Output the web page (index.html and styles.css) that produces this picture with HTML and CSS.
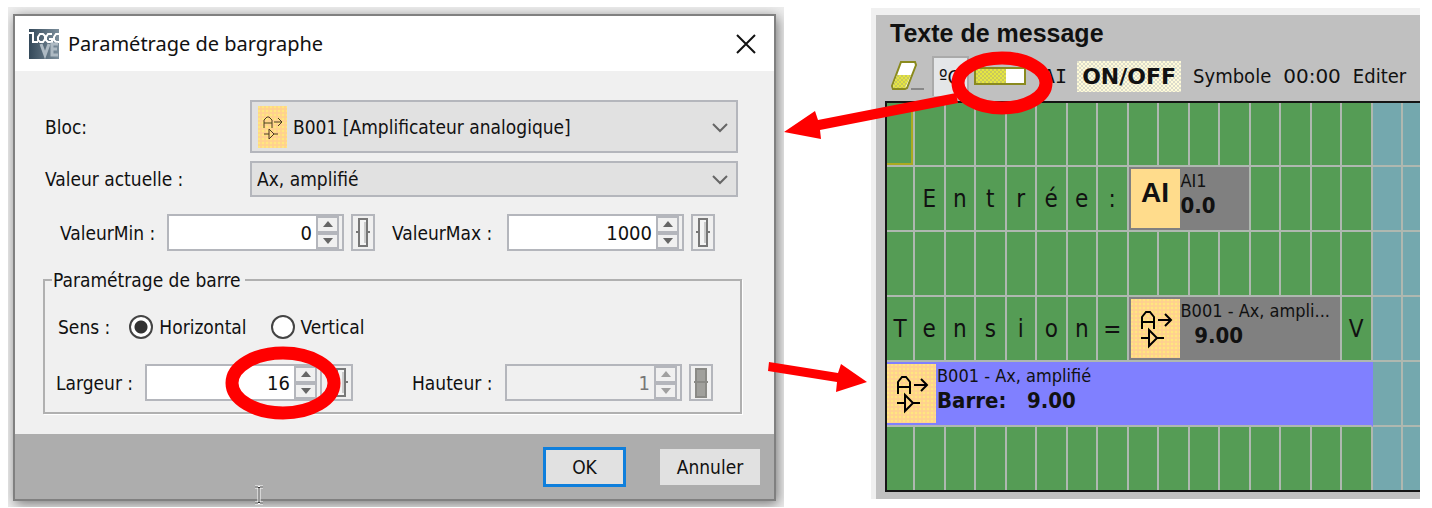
FILE: index.html
```html
<!DOCTYPE html>
<html lang="fr">
<head>
<meta charset="utf-8">
<title>Paramétrage de bargraphe</title>
<link rel="stylesheet" href="styles.css">
</head>
<body>
<svg class="defs" aria-hidden="true">
  <defs>
    <pattern id="speckle" width="4" height="4" patternUnits="userSpaceOnUse">
      <rect width="4" height="4" fill="#ffd58a"/>
      <rect width="2" height="2" fill="#ffe680"/>
      <rect x="2" y="2" width="2" height="2" fill="#ffcf92"/>
    </pattern>
    <pattern id="hatch" width="4" height="4" patternUnits="userSpaceOnUse">
      <rect width="4" height="4" fill="#e6e640"/>
      <rect width="2" height="2" fill="#c9c95c"/>
      <rect x="2" y="2" width="2" height="2" fill="#c9c95c"/>
    </pattern>
    <linearGradient id="steel"><stop offset="0" stop-color="#34495a"/><stop offset="1" stop-color="#7d8f9c"/></linearGradient>
    <symbol id="amplifier" viewBox="0 0 49 59">
      <rect width="49" height="59" fill="url(#speckle)"/>
      <path d="M11 30V18l4-5h4l4 5v12M11 23h12M27 21h13M34 15l6 6-6 6M10 39h8M18 31v16l8-8zM26 39h7" fill="none" stroke="#000" stroke-width="2"/>
    </symbol>
    <symbol id="slider" viewBox="0 0 20 33">
      <rect x="6" y="3" width="8" height="27" fill="#f4f4f4" stroke="#777" stroke-width="2"/>
      <path d="M3 16h3M14 16h3" stroke="#777" stroke-width="2"/>
      <path d="M12 6v21" stroke="#ccc" stroke-width="2"/>
    </symbol>
  </defs>
</svg>
<main class="sheet">
  <section class="shot">
    <form class="dialog" aria-labelledby="dialog-title">
      <header class="titlebar">
        <svg class="app-icon" viewBox="0 0 30 30" aria-hidden="true">
          <rect width="30" height="30" fill="url(#steel)"/>
          <path d="M0 4h4v9h5M14 5h-3l-2 3v3l2 2h3l2-3V7zM23 5h-4l-2 3v3l2 2h4v-3h-3M30 5h-3l-2 3v3l2 2h3" fill="none" stroke="#fff" stroke-width="2"/>
          <path d="M12 15l4 11 4-11M29 15h-6v11h6M23 20h5" fill="none" stroke="#aebac3" stroke-width="3"/>
        </svg>
        <h1 class="dialog-title" id="dialog-title">Paramétrage de bargraphe</h1>
        <button class="close" type="button" aria-label="Fermer">
          <svg viewBox="0 0 20 20"><path d="M1 1l18 18M19 1L1 19" stroke="#111" stroke-width="2"/></svg>
        </button>
      </header>
      <div class="form-body">
        <div class="field">
          <label for="bloc">Bloc:</label>
          <div class="combo">
            <select class="with-icon" id="bloc"><option>B001 [Amplificateur analogique]</option></select>
            <svg class="combo-icon" viewBox="0 0 29 42" aria-hidden="true">
              <rect width="29" height="42" fill="url(#speckle)"/>
              <path d="M6 22v-8l3-3h2l3 3v8M6 17h8M16 16h8M20 12l4 4-4 4M6 28h5M11 23v10l5-5zM16 28h4" fill="none" stroke="#4a3c20" stroke-width="1"/>
            </svg>
            <svg class="chevron" viewBox="0 0 16 10"><path d="M1 1l7 7 7-7" fill="none" stroke="#666" stroke-width="2"/></svg>
          </div>
        </div>
        <div class="field">
          <label for="valeur">Valeur actuelle :</label>
          <div class="combo">
            <select id="valeur"><option>Ax, amplifié</option></select>
            <svg class="chevron" viewBox="0 0 16 10"><path d="M1 1l7 7 7-7" fill="none" stroke="#666" stroke-width="2"/></svg>
          </div>
        </div>
        <div class="pair range">
          <label for="vmin">ValeurMin :</label>
          <div class="spinner">
            <input id="vmin" type="text" value="0">
            <span class="steps"><button type="button" class="up" aria-label="Augmenter"></button><button type="button" class="down" aria-label="Diminuer"></button></span>
          </div>
          <button class="ref" type="button" aria-label="Référence"><svg><use href="#slider"/></svg></button>
          <label for="vmax">ValeurMax :</label>
          <div class="spinner">
            <input id="vmax" type="text" value="1000">
            <span class="steps"><button type="button" class="up" aria-label="Augmenter"></button><button type="button" class="down" aria-label="Diminuer"></button></span>
          </div>
          <button class="ref" type="button" aria-label="Référence"><svg><use href="#slider"/></svg></button>
        </div>
        <fieldset class="group">
          <legend>Paramétrage de barre</legend>
          <div class="direction">
            <span>Sens :</span>
            <label class="choice"><input type="radio" name="sens" checked>Horizontal</label>
            <label class="choice"><input type="radio" name="sens">Vertical</label>
          </div>
          <div class="pair size">
            <label for="largeur">Largeur :</label>
            <div class="spinner">
              <input id="largeur" type="text" value="16">
              <span class="steps"><button type="button" class="up" aria-label="Augmenter"></button><button type="button" class="down" aria-label="Diminuer"></button></span>
            </div>
            <button class="ref" type="button" aria-label="Référence"><svg><use href="#slider"/></svg></button>
            <label for="hauteur">Hauteur :</label>
            <div class="spinner off">
              <input id="hauteur" type="text" value="1" disabled>
              <span class="steps"><button type="button" class="up" aria-label="Augmenter" disabled></button><button type="button" class="down" aria-label="Diminuer" disabled></button></span>
            </div>
            <button class="ref" type="button" aria-label="Référence" disabled>
              <svg viewBox="0 0 20 33"><rect x="5" y="3" width="10" height="28" fill="#a0a09c" stroke="#8a8a86" stroke-width="2"/><path d="M3 16h14" stroke="#8a8a86" stroke-width="2"/></svg>
            </button>
          </div>
        </fieldset>
      </div>
      <footer class="actions">
        <button class="btn primary" type="submit">OK</button>
        <button class="btn" type="button">Annuler</button>
      </footer>
    </form>
  </section>
  <section class="message">
    <div class="panel">
      <h2 class="panel-title">Texte de message</h2>
      <div class="toolbar">
        <button class="tool eraser" type="button" aria-label="Effacer">
          <svg viewBox="0 0 34 30"><path d="M10 1h14l1 3-9 23-2 1H2l-1-3z" fill="#fff" stroke="#8a8a1e" stroke-width="2"/><path d="M6 14h14l-6 13H3l-1-2z" fill="url(#hatch)"/><path d="M20 28h13" stroke="#888" stroke-width="2"/></svg>
        </button>
        <button class="tool unit" type="button">ºC</button>
        <button class="tool bar" type="button" aria-label="Bargraphe">
          <svg viewBox="0 0 52 18"><rect x="1" y="1" width="50" height="16" fill="#fff" stroke="#8a8a1e" stroke-width="2"/><rect x="2" y="2" width="30" height="14" fill="url(#hatch)"/></svg>
        </button>
        <button class="tool ai" type="button">AI</button>
        <button class="tool onoff" type="button">ON/OFF</button>
        <button class="tool" type="button">Symbole</button>
        <button class="tool clock" type="button">00:00</button>
        <button class="tool edit" type="button">Editer</button>
      </div>
      <div class="lcd" id="lcd"></div>
    </div>
  </section>
  <svg class="notes" viewBox="0 0 1432 508" aria-hidden="true">
    <g fill="none" stroke="#f00" stroke-width="13">
      <ellipse cx="283" cy="383" rx="51" ry="30"/>
      <ellipse cx="1002" cy="83" rx="44" ry="25"/>
    </g>
    <path d="M956 93L818 120L815 111L784 132L821 139L820 130L958 103z" fill="#f00"/>
    <path d="M769 362L838 373L841 364L867 382L836 392L837 382L768 371z" fill="#f00"/>
    <path d="M255 487h3l1 1 1-1h3M259 488v14M255 503h3l1-1 1 1h3" fill="none" stroke="#fff" stroke-width="3"/>
    <path d="M255 487h3l1 1 1-1h3M259 488v14M255 503h3l1-1 1 1h3" fill="none" stroke="#333" stroke-width="1"/>
  </svg>
</main>
<script src="script.js"></script>
</body>
</html>
```
FILE: styles.css
```css
* { box-sizing: border-box; }
body {
  margin: 0;
  background: #fff;
  color: #111;
  font: 19px/24px "DejaVu Sans Condensed", "DejaVu Sans", sans-serif;
}
button, input, select { margin: 0; padding: 0; border: 0; font: inherit; color: inherit; border-radius: 0; }
h1, h2 { margin: 0; }
.defs { position: absolute; width: 0; height: 0; }
.sheet {
  position: relative;
  display: grid;
  grid-template-columns: 776fr 549fr;
  column-gap: 87px;
  align-items: start;
  padding: 7px 12px 1px 8px;
  overflow: hidden;
}
.notes { position: absolute; top: 0; left: 0; width: 100%; pointer-events: none; }

.shot { min-width: 0; padding: 7px 8px 6px 5px; background: #eee; overflow: hidden; }
.dialog { border: 2px solid #808080; background: #f0f0f0; box-shadow: 2px 3px 12px #777; }
.titlebar { display: flex; align-items: center; height: 55px; padding: 0 18px 0 14px; background: #fff; }
.app-icon { width: 30px; height: 30px; }
.dialog-title { flex: 1; margin-left: 9px; font: 20px/30px "Noto Sans", "Open Sans", sans-serif; }
.close { display: flex; background: none; }
.close svg { width: 20px; height: 20px; }
.form-body { display: flex; flex-direction: column; padding: 29px 32px 20px 28px; }
.field { display: grid; grid-template-columns: 205px 1fr; align-items: center; margin: 0 4px 8px 2px; }
.combo { position: relative; }
.combo select {
  display: block;
  width: 100%;
  height: 36px;
  padding: 0 40px 0 5px;
  border: 2px solid #b4b6bc;
  background: #e1e1e1;
  appearance: none;
}
.combo select.with-icon { height: 53px; padding-left: 41px; }
.combo-icon { position: absolute; left: 8px; top: 6px; width: 29px; height: 42px; }
.chevron { position: absolute; right: 10px; top: calc(50% - 4px); width: 16px; height: 10px; pointer-events: none; }
.pair { display: grid; align-items: center; }
.range { grid-template-columns: 107px minmax(0, 1fr) 24px 132px minmax(0, 1fr) 24px; margin: 9px 27px 15px 17px; }
.size { grid-template-columns: 89px minmax(0, 1fr) 24px 152px minmax(0, 1fr) 24px; margin-top: 25px; }
.range .ref + label { padding-left: 17px; }
.size .ref + label { padding-left: 59px; }
.spinner { display: flex; height: 37px; margin-right: 7px; border: 2px solid #b4b6bc; background: #f0f0f0; }
.spinner input { flex: 1; min-width: 0; padding-right: 4px; background: #fff; text-align: right; font-size: 20px; }
.spinner.off input { background: #f0f0f0; color: #777; }
.steps { display: flex; flex-direction: column; width: 26px; padding-right: 3px; }
.steps button { display: flex; flex: 1; align-items: center; justify-content: center; border: 2px solid #b4b6bc; background: #f0f0f0; }
.steps button::before { content: ""; border: 5px solid transparent; }
.steps .up::before { border-top: 0; border-bottom: 6px solid #666; }
.steps .down::before { border-bottom: 0; border-top: 6px solid #666; }
.off .up::before { border-bottom-color: #a0a0a0; }
.off .down::before { border-top-color: #a0a0a0; }
.ref { display: flex; width: 24px; height: 37px; border: 2px solid #b4b6bc; background: #f0f0f0; }
.ref svg { width: 20px; height: 33px; }
.group { min-width: 0; margin: 2px 0 0; padding: 23px 27px 11px 11px; border: 2px solid #b0b0b0; box-shadow: 1px 1px 0 #fff; }
.group legend { margin-left: -4px; padding: 0 4px 0 1px; }
.direction { display: flex; align-items: center; padding-left: 2px; }
.choice { display: flex; align-items: center; margin-left: 19px; }
.choice + .choice { margin-left: 24px; }
.choice input { width: 24px; height: 24px; margin-right: 6px; border: 2px solid #444; border-radius: 50%; background: #fff; appearance: none; }
.choice input:checked { background: radial-gradient(circle, #333 0 6px, #fff 7px); }
.actions { display: flex; align-items: center; justify-content: flex-end; gap: 34px; height: 65px; padding: 0 14px; background: #adadad; }
.btn { width: 100px; height: 36px; background: #e1e1e1; }
.primary { width: 83px; height: 40px; border: 3px solid #0f7fdc; }

.message { min-width: 0; margin-top: 1px; padding: 7px 0 0 5px; background: #f0f0f0; }
.panel { padding: 3px 0 7px 9px; background: #c0c0c0; overflow: hidden; }
.panel-title { padding-left: 5px; font: bold 25px/30px "Liberation Sans", Arial, sans-serif; }
.toolbar { display: flex; align-items: center; height: 40px; margin: 8px 0 5px; padding-left: 6px; overflow: hidden; white-space: nowrap; font-size: 20px; }
.tool { flex: none; margin-right: 12px; background: none; }
.eraser { display: flex; margin-right: 7px; }
.eraser svg { width: 34px; height: 30px; }
.unit { width: 37px; height: 40px; margin-right: 5px; padding-left: 5px; border: 2px solid #aaa; border-bottom: 0; background: #e4e6e8; text-align: left; }
.bar { display: flex; margin-right: 17px; }
.bar svg { width: 52px; height: 18px; }
.ai { font-family: "DejaVu Sans Mono", monospace; margin-right: 10px; }
.onoff {
  width: 104px;
  height: 31px;
  background: repeating-conic-gradient(#fffbd8 0 25%, #dcdccc 0 50%) 0 0 / 4px 4px;
  font: bold 22px/31px "DejaVu Sans", sans-serif;
}
.clock { font-family: "DejaVu Sans", sans-serif; }
.edit { margin-right: 0; }
.lcd {
  display: grid;
  grid-template-columns: 28px repeat(16, minmax(0, 1fr)) 17px;
  grid-template-rows: 64px repeat(4, 65px) 63px;
  border: 2px solid #151515;
  border-right: 0;
}
.cell {
  display: flex;
  align-items: center;
  justify-content: center;
  border: solid #afb8b0;
  border-width: 0 2px 2px 0;
  background: #559c55;
  font-size: 24px;
}
.cell.free { background: #74a8ae; }
.cell.last { border-right: 0; }
.cell.bottom { border-bottom: 0; }
.cell.cursor { box-shadow: inset -2px -2px 0 #aaaa20; }
.block { display: flex; min-width: 0; padding: 2px 0 0 2px; border: solid #afb8b0; border-width: 0 2px 2px 0; background: #808080; }
.block.wide { padding-left: 0; border-right-color: #8080ff; background: #8080ff; }
.tile { flex: none; width: 49px; height: 59px; }
.tile.plain { background: #ffdc8c; text-align: center; font: bold 28px/48px "Liberation Sans", Arial, sans-serif; }
.lines { min-width: 0; padding-left: 1px; white-space: pre; }
.lines span, .lines b { display: block; }
.lines span { font-size: 18px; line-height: 24px; }
.lines b { font-size: 22px; line-height: 26px; }
```
FILE: script.js
```js
const amplifier = '<svg class="tile"><use href="#amplifier"/></svg>';
const rows = [
  { text: "" },
  { text: " Entrée:", block: { at: 8, span: 4, tile: '<span class="tile plain">AI</span>', name: "AI1", value: "0.0" } },
  { text: "" },
  { text: "Tension=       V", block: { at: 8, span: 7, tile: amplifier, name: "B001 - Ax, ampli...", value: "  9.00" } },
  { text: "", block: { at: 0, span: 16, wide: true, tile: amplifier, name: "B001 - Ax, amplifié", value: "Barre:   9.00" } },
  { text: "" }
];
const lcd = document.getElementById("lcd");
rows.forEach((row, r) => {
  for (let c = 0; c < 18; c++) {
    const el = document.createElement("div");
    if (row.block && c === row.block.at) {
      el.className = "block" + (row.block.wide ? " wide" : "");
      el.style.gridColumn = "span " + row.block.span;
      el.innerHTML = row.block.tile + '<div class="lines"><span>' + row.block.name + "</span><b>" + row.block.value + "</b></div>";
      c += row.block.span - 1;
    } else {
      el.className = "cell";
      if (c > 15) el.classList.add("free");
      if (c === 17) el.classList.add("last");
      if (r === 5) el.classList.add("bottom");
      if (r === 0 && c === 0) el.classList.add("cursor");
      el.textContent = (row.text[c] || "").trim();
    }
    lcd.append(el);
  }
});
```
